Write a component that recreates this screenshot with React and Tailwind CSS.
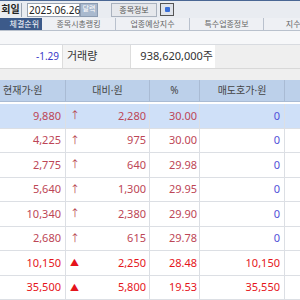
import React from 'react';

const rows = [
  { price: '9,880', diff: '2,280', pct: '30.00', ask: '0', tri: false, hl: true },
  { price: '4,225', diff: '975', pct: '30.00', ask: '0', tri: false },
  { price: '2,775', diff: '640', pct: '29.98', ask: '0', tri: false },
  { price: '5,640', diff: '1,300', pct: '29.95', ask: '0', tri: false },
  { price: '10,340', diff: '2,380', pct: '29.90', ask: '0', tri: false },
  { price: '2,680', diff: '615', pct: '29.78', ask: '0', tri: false },
  { price: '10,150', diff: '2,250', pct: '28.48', ask: '10,150', tri: true },
  { price: '35,500', diff: '5,800', pct: '19.53', ask: '35,550', tri: true },
];

const tabs = ['종목시총랭킹', '업종예상지수', '특수업종정보', '지수기여'];

const App = () => {
  return (
    <div
      className="w-[300px] h-[300px] overflow-hidden bg-white text-[11px] text-[#333]"
      style={{ fontFamily: '"Noto Sans", "Noto Sans CJK KR", sans-serif' }}
    >
      {/* top toolbar */}
      <div className="h-[18px] flex items-center bg-[#e9ecf1] border-t border-[#4a6794]">
        <div className="w-[22px] h-[14px] flex items-center justify-center border-r border-[#9aa4b2] text-[10px] font-semibold text-[#222] whitespace-nowrap">
          회일
        </div>
        <div className="ml-[5px] w-[53px] h-[14px] flex items-center pl-[1px] bg-white border border-[#9aa4b2] text-[10px] text-[#222] leading-none">
          2025.06.26
        </div>
        <div className="w-[18px] h-[14px] bg-[#a9b9ce] border border-[#8b9bb1] flex items-center justify-center text-[7px] text-white">
          달력
        </div>
        <div className="ml-[13px] w-[46px] h-[14px] flex items-center justify-center bg-[#e6e8ec] border border-[#aab2be] text-[8px] text-[#555]">
          종목정보
        </div>
        <div className="ml-[3px] w-[14px] h-[13px] flex items-center justify-center bg-[#dfe3ea] border border-[#555]">
          <div className="w-[5px] h-[5px] rounded-[1px] bg-[#3a6fd8]" />
        </div>
      </div>

      {/* tabs */}
      <div className="h-[13px] flex bg-[#eef0f4] border-b border-[#b9c1cd] text-[8px] leading-none">
        <div className="w-[42px] shrink-0 flex items-center justify-end pr-[3px] bg-[#3c5a8a] text-white overflow-hidden whitespace-nowrap">
          체결순위
        </div>
        {tabs.map((t) => (
          <div
            key={t}
            className="w-[74px] shrink-0 flex items-center justify-center border-r border-[#b9c1cd] text-[#666] whitespace-nowrap"
          >
            {t}
          </div>
        ))}
      </div>

      {/* blank strip */}
      <div className="h-[14px] bg-[#f6f7f9] border-b border-[#d8dbe0]" />

      {/* info row */}
      <div className="h-[24px] flex bg-[#efefef] border-b border-[#d8d8d8]">
        <div className="w-[62px] flex items-center justify-end pr-[3px] bg-white text-[10px] text-[#3a3ac8]">-1.29</div>
        <div className="w-[68px] flex items-center pl-[4px] bg-[#f4f4f4] text-[#333] border-l border-[#dddddd]">거래량</div>
        <div className="w-[85px] flex items-center justify-end pr-[2px] bg-white text-[#333] border-l border-[#dddddd]">
          938,620,000주
        </div>
      </div>

      {/* gap */}
      <div className="h-[11px] bg-[#efefef]" />

      {/* header */}
      <div className="h-[22px] flex bg-[#bcd0ea] border-b border-[#a9bbd4] text-[#444] text-[10px]">
        <div className="w-[66px] flex items-center pl-[3px] border-r border-[#a9bbd4]">현재가·원</div>
        <div className="w-[84px] flex items-center justify-center border-r border-[#a9bbd4]">대비·원</div>
        <div className="w-[50px] flex items-center justify-center border-r border-[#a9bbd4]">%</div>
        <div className="w-[85px] flex items-center justify-center border-r border-[#a9bbd4]">매도호가·원</div>
        <div className="flex-1" />
      </div>

      {/* rows */}
      <div className="pt-[2px]">
        {rows.map((r, i) => {
          const red = r.tri ? 'text-[#e5141b]' : 'text-[#bd4656]';
          return (
            <div
              key={i}
              className={`h-[24.5px] flex border-b border-[#dcdfe4] ${r.hl ? 'bg-[#cfe0f8]' : 'bg-white'}`}
            >
              <div className={`w-[66px] flex items-center justify-end pr-[4px] border-r border-[#dcdfe4] ${red}`}>
                {r.price}
              </div>
              <div className={`w-[84px] flex items-center justify-between pl-[4px] pr-[3px] border-r border-[#dcdfe4] ${red}`}>
                {r.tri ? (
                  <span className="text-[9px] text-[#e5141b]">▲</span>
                ) : (
                  <span className="text-[10px] text-[#b5404e]">↑</span>
                )}
                <span>{r.diff}</span>
              </div>
              <div className={`w-[50px] flex items-center justify-end pr-[2px] border-r border-[#dcdfe4] ${red}`}>
                {r.pct}
              </div>
              <div
                className={`w-[85px] flex items-center justify-end pr-[4px] border-r border-[#dcdfe4] ${
                  r.ask === '0' ? 'text-[#5050d8]' : 'text-[#e5141b]'
                }`}
              >
                {r.ask}
              </div>
              <div className="flex-1" />
            </div>
          );
        })}
      </div>
    </div>
  );
};

export default App;
